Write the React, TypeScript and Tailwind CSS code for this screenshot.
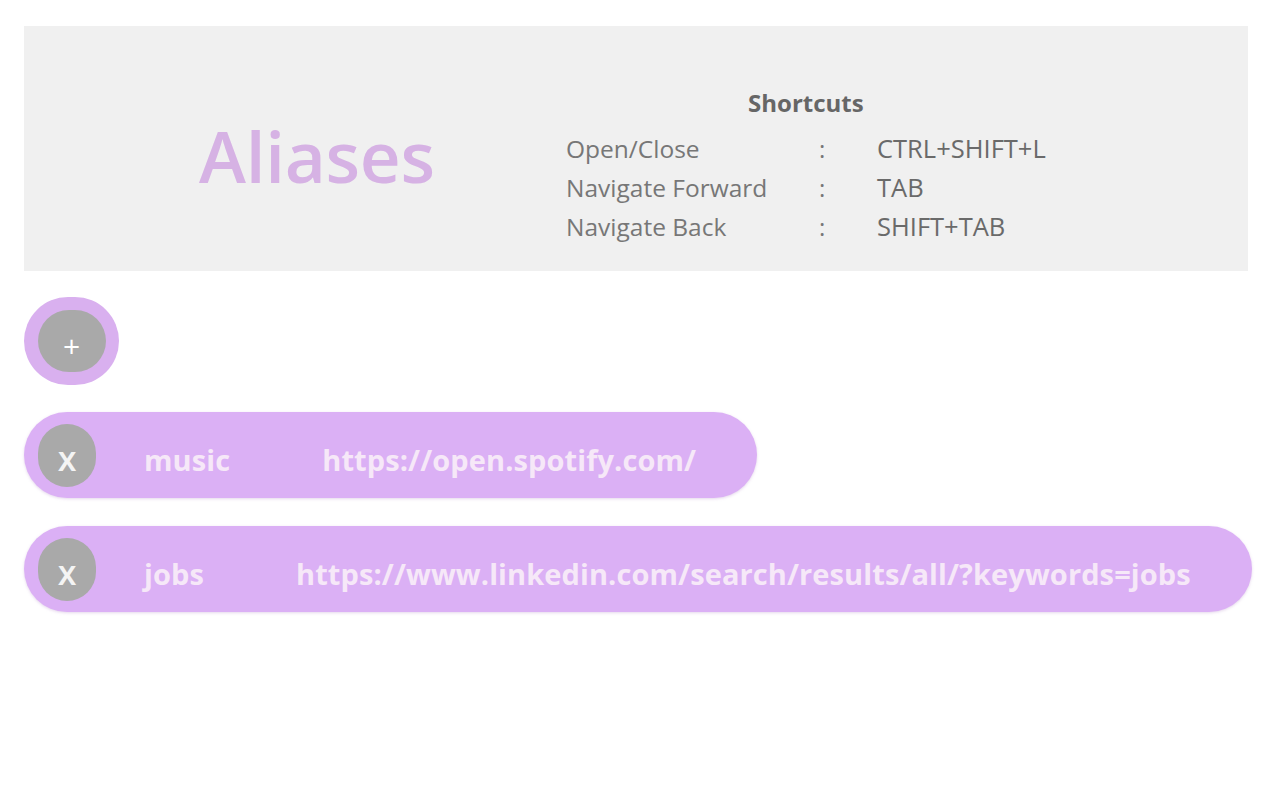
import React from 'react'

const ALIASES = [
  { name: 'music', url: 'https://open.spotify.com/' },
  { name: 'jobs', url: 'https://www.linkedin.com/search/results/all/?keywords=jobs' },
]

const SHORTCUTS = [
  { action: 'Open/Close', keys: 'CTRL+SHIFT+L' },
  { action: 'Navigate Forward', keys: 'TAB' },
  { action: 'Navigate Back', keys: 'SHIFT+TAB' },
]

export default function App() {
  return (
    <div className="min-h-[800px] bg-white px-[24px] pt-[26px]" style={{ fontFamily: '"Open Sans", "Noto Sans", sans-serif' }}>
      {/* Header */}
      <div className="flex h-[245px] w-[1224px] items-center bg-[#f0f0f0]">
        <h1 className="ml-[175px] mt-[14px] w-[236px] text-[71px] font-semibold leading-none tracking-[-0.3px] text-[#d6b2e4]">Aliases</h1>
        <div className="ml-[131px] mt-[36px]">
          <p className="text-center text-[24px] font-bold leading-none text-[#666]">Shortcuts</p>
          <div className="mt-[18px] flex flex-col gap-[8px]">
            {SHORTCUTS.map((s, i) => (
              <div key={i} className="flex items-baseline leading-[31px] text-[#777]">
                <span className="w-[253px] text-[24.5px]">{s.action}</span>
                <span className="w-[58px] text-[24px]">:</span>
                <span className="text-[25.5px] text-[#6a6a6a]">{s.keys}</span>
              </div>
            ))}
          </div>
        </div>
      </div>

      {/* Add button */}
      <div className="mt-[26px] flex h-[88px] w-[95px] items-center justify-center rounded-full bg-[#d9b0ef]">
        <div className="flex h-[62px] w-[68px] items-center justify-center rounded-full bg-[#a9a9a9] pt-[10px] text-[30px] leading-none text-white">+</div>
      </div>

      {/* Alias rows */}
      <div className="mt-[27px] flex flex-col items-start gap-[28px]">
        {ALIASES.map((a, i) => (
          <div key={i} className="flex h-[86px] items-center rounded-full bg-[#dbb0f5] pl-[14px] pr-[61px] shadow-[0_1px_3px_rgba(180,140,200,0.35)]">
            <div className="flex h-[63px] w-[58px] items-center justify-center rounded-full bg-[#a9a9a9] pt-[6px] text-[34px] font-semibold leading-none text-[#f4f4f4]">x</div>
            <span className="ml-[48px] mt-[9px] text-[29px] font-bold tracking-[0.1px] text-[#f6e8f8]">{a.name}</span>
            <span className="ml-[92px] mt-[9px] text-[29px] font-bold tracking-[0.1px] text-[#f6e8f8]">{a.url}</span>
          </div>
        ))}
      </div>
    </div>
  )
}
